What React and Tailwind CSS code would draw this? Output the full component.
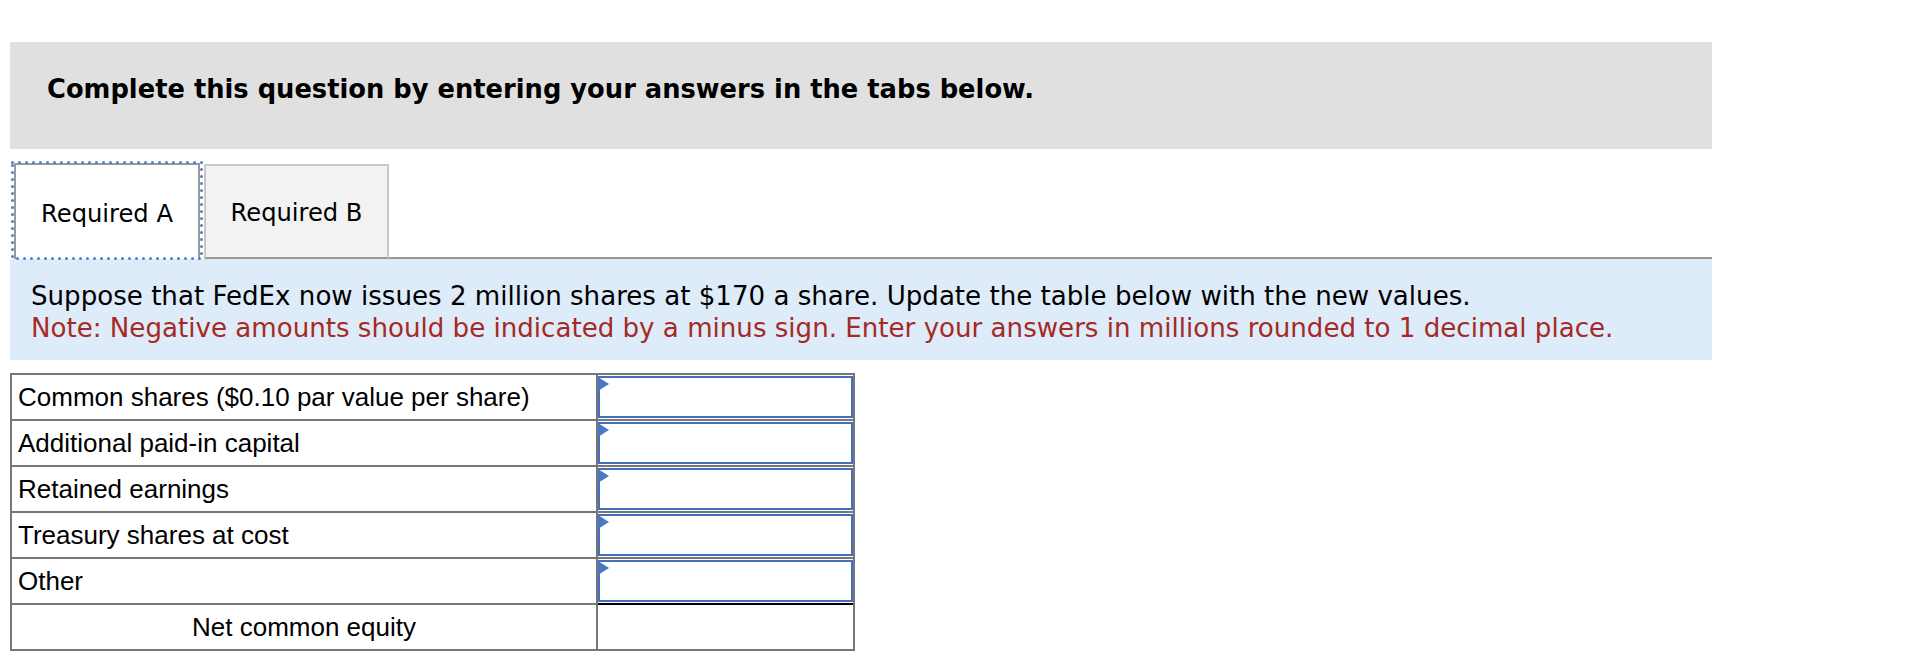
export default function App() {
  const rows = [
    "Common shares ($0.10 par value per share)",
    "Additional paid-in capital",
    "Retained earnings",
    "Treasury shares at cost",
    "Other",
  ];
  return (
    <div className="relative w-[1932px] h-[668px] bg-white overflow-hidden font-['DejaVu_Sans',sans-serif] text-black">
      <div className="w-[1702px] ml-[10px] pt-[42px]">
        <div className="h-[107px] bg-[#e0e0e0] pl-[37px] pt-[31px]">
          <h2 className="font-bold text-[25.75px] leading-[32px]">
            Complete this question by entering your answers in the tabs below.
          </h2>
        </div>

        <div className="mt-[12px] h-[98px] flex items-end">
          <div className="relative w-[194px] h-full">
            <div className="ml-[4px] mt-[2px] w-[186px] h-[96px] pt-[5px] border-2 border-b-0 border-[#9a9a9a] bg-white flex items-center justify-center text-[24.2px]">
              Required A
            </div>
            <svg className="absolute left-[1px] top-0 overflow-visible z-10" width="192" height="99">
              <rect x="1.5" y="1.5" width="189" height="96" fill="none" stroke="#4f7fc7" strokeWidth="3" strokeDasharray="0 7" strokeLinecap="round" />
            </svg>
          </div>
          <div className="w-[185px] h-[95px] pt-[4px] border-2 border-[#c8c8c8] border-b-[#999] bg-[#f2f2f2] flex items-center justify-center text-[24.2px]">
            Required B
          </div>
          <div className="flex-1 border-b-2 border-[#999]"></div>
        </div>

        <div className="h-[101px] bg-[#deebf8] pl-[21px] pt-[21px] text-[26.1px] leading-[32px]">
          <p>Suppose that FedEx now issues 2 million shares at $170 a share. Update the table below with the new values.</p>
          <p className="text-[#a52a25]">Note: Negative amounts should be indicated by a minus sign. Enter your answers in millions rounded to 1 decimal place.</p>
        </div>

        <div className="mt-[13px] w-[845px] border-2 border-[#777] font-['Liberation_Sans',Arial,sans-serif] text-[26px]">
          {rows.map((r) => (
            <div key={r} className="flex h-[46px] border-b-2 border-[#777]">
              <div className="w-[586px] border-r-2 border-[#777] flex items-center pl-[6px]">{r}</div>
              <div className="flex-1 relative py-[1px]">
                <div className="h-full border-2 border-[#4570bd] bg-white"></div>
                <svg className="absolute left-0 top-[2px]" width="11" height="14" viewBox="0 0 11 14">
                  <polygon points="0,0 11,7 0,14" fill="#4a78c4" />
                </svg>
              </div>
            </div>
          ))}
          <div className="flex h-[44px]">
            <div className="w-[586px] border-r-2 border-[#777] flex items-center justify-center">Net common equity</div>
            <div className="flex-1 -mt-[2px] border-t-2 border-black bg-white"></div>
          </div>
        </div>
      </div>
    </div>
  );
}
